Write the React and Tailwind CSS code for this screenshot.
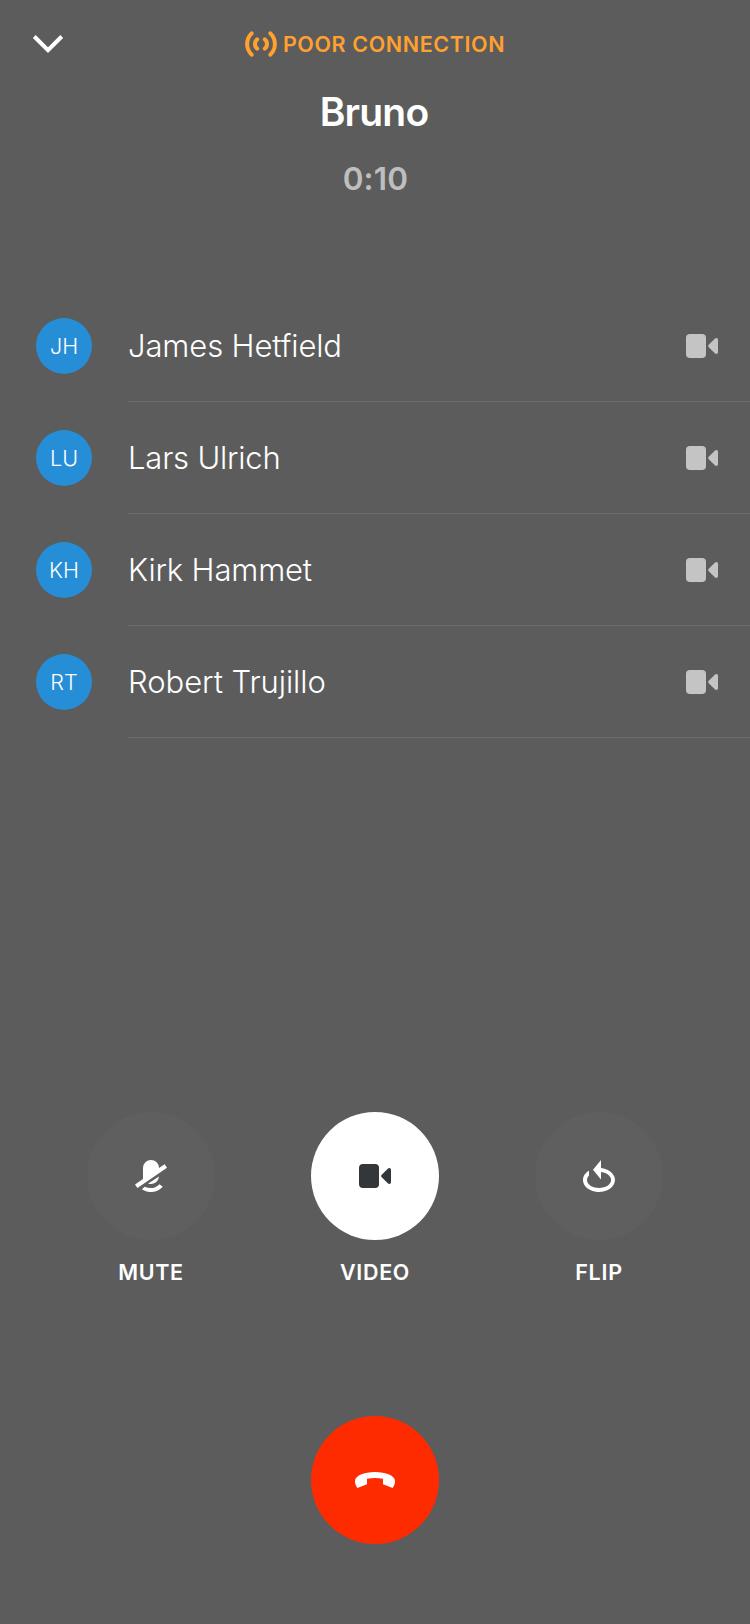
import React from "react";

const participants = [
  { initials: "JH", name: "James Hetfield", spacing: "tracking-[-0.12px]" },
  { initials: "LU", name: "Lars Ulrich", spacing: "tracking-[-0.2px]" },
  { initials: "KH", name: "Kirk Hammet", spacing: "tracking-[-0.15px]" },
  { initials: "RT", name: "Robert Trujillo", spacing: "tracking-[-0.05px]" },
];

function ChevronIcon() {
  return (
    <svg width="32" height="20" viewBox="0 0 32 20" fill="none" stroke="currentColor" strokeWidth="4">
      <path d="M2.3 2.5 16 16.2 29.7 2.5" />
    </svg>
  );
}

function SignalIcon() {
  return (
    <svg width="32" height="26" viewBox="0 0 32 26" fill="none" stroke="currentColor" strokeWidth="4" strokeLinecap="round">
      <path d="M6.6 2.3C.6 8.4.6 17.6 6.6 23.7M25.4 2.3C31.4 8.4 31.4 17.6 25.4 23.7" />
      <path d="M12.2 8.3C9.3 10.4 9.3 15.6 12.2 17.7M19.8 8.3C22.7 10.4 22.7 15.6 19.8 17.7" />
    </svg>
  );
}

function VideoIcon() {
  return (
    <svg width="32" height="24" viewBox="0 0 32 24" fill="currentColor">
      <rect width="20" height="24" rx="4" />
      <path d="M22.5 11 28.8 4.7Q29.5 4 30.4 4 32 4 32 6V18Q32 20 30.4 20 29.5 20 28.8 19.3L22.5 13Q21.6 12 22.5 11Z" />
    </svg>
  );
}

function MuteIcon() {
  return (
    <svg width="32" height="32" viewBox="0 0 32 32" fill="currentColor">
      <path d="M0 24.4 8 19V8A8 8 0 0 1 24 8L29.6 4.2 32 7.7 2.4 28Z" />
      <path d="M24 16.6C23.4 21 20.4 24 16 24 14.9 24 14 23.8 13.2 23.4Z" />
      <path d="M6.8 29.3 9.8 26.7C14.8 29.2 20.4 28.3 24.4 24.2L27.8 26.8C22.6 32.6 14 33.8 6.8 29.3Z" />
    </svg>
  );
}

function FlipIcon() {
  return (
    <svg width="32" height="32" viewBox="0 0 32 32" fill="currentColor">
      <path d="M18 0V8.1A16 12 0 1 1 6 10.6V15.6A12 8 0 1 0 18 12.1V19.5L10 9.7Z" />
    </svg>
  );
}

function HangUpIcon() {
  return (
    <svg width="40" height="16" viewBox="0 0 40 16" fill="currentColor">
      <path d="M2.4 16C.6 13.8 0 11.5 0 9 0 3.8 9 0 20 0S40 3.8 40 9C40 11.5 39.4 13.8 37.6 16L28 12.2V6.8Q20 5 12 6.8V12.2Z" />
    </svg>
  );
}

function Participant({ initials, name, spacing }) {
  return (
    <li className="flex h-28 pl-9">
      <div className="mt-7 mr-9 flex size-14 shrink-0 items-center justify-center rounded-full bg-[#258ed6] text-[21.5px] font-light">
        {initials}
      </div>
      <div className="flex flex-1 items-center justify-between border-b border-[#6b6b6b] pt-px pr-8">
        <span className={`text-[31px] leading-10 font-light [font-variant-ligatures:none] ${spacing}`}>{name}</span>
        <span className="text-[#c4c4c4]">
          <VideoIcon />
        </span>
      </div>
    </li>
  );
}

function CallControl({ label, active, children }) {
  return (
    <button className="flex w-32 flex-col items-center">
      <span
        className={`flex size-32 items-center justify-center rounded-full ${
          active ? "bg-white text-[#33373a]" : "bg-[#5f5f5f] text-white"
        }`}
      >
        {children}
      </span>
      <span className="mt-[18px] text-[21.5px] leading-7 font-semibold tracking-[0.7px]">{label}</span>
    </button>
  );
}

export default function App() {
  return (
    <main className="flex h-[1624px] w-[750px] flex-col overflow-hidden bg-[#5c5c5c] font-['Inter',sans-serif] text-white">
      <header className="flex h-[290px] flex-col">
        <div className="grid grid-cols-[1fr_auto_1fr] items-center px-8 pt-[30px]">
          <button>
            <ChevronIcon />
          </button>
          <div className="flex h-7 items-center gap-1.5 text-[#ffa02f]">
            <SignalIcon />
            <span className="text-[21.5px] leading-7 font-semibold tracking-[0.6px] whitespace-nowrap">POOR CONNECTION</span>
          </div>
        </div>
        <h1 className="mt-[30px] pr-0.5 text-center text-[39px] leading-12 font-semibold tracking-[-0.8px]">Bruno</h1>
        <p className="mt-[23px] pl-px text-center text-[31.5px] leading-10 font-semibold tracking-[0.2px] text-[#bebebe]">0:10</p>
      </header>

      <ul className="flex flex-col">
        {participants.map((p) => (
          <Participant key={p.initials} {...p} />
        ))}
      </ul>

      <section className="mt-[374px] flex justify-center gap-24">
        <CallControl label="MUTE">
          <MuteIcon />
        </CallControl>
        <CallControl label="VIDEO" active>
          <VideoIcon />
        </CallControl>
        <CallControl label="FLIP">
          <FlipIcon />
        </CallControl>
      </section>

      <button className="mt-[130px] flex size-32 items-center justify-center self-center rounded-full bg-[#ff2b00]">
        <HangUpIcon />
      </button>
    </main>
  );
}
